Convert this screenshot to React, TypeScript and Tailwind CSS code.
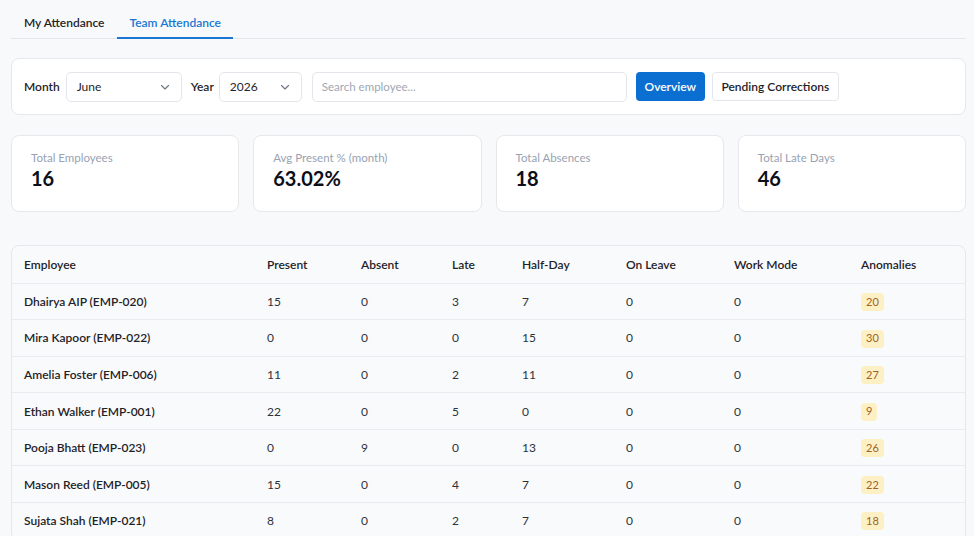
import React from "react";

const rows = [
  { name: "Dhairya AIP (EMP-020)", p: 15, a: 0, l: 3, h: 7, lv: 0, wm: 0, an: 20 },
  { name: "Mira Kapoor (EMP-022)", p: 0, a: 0, l: 0, h: 15, lv: 0, wm: 0, an: 30 },
  { name: "Amelia Foster (EMP-006)", p: 11, a: 0, l: 2, h: 11, lv: 0, wm: 0, an: 27 },
  { name: "Ethan Walker (EMP-001)", p: 22, a: 0, l: 5, h: 0, lv: 0, wm: 0, an: 9 },
  { name: "Pooja Bhatt (EMP-023)", p: 0, a: 9, l: 0, h: 13, lv: 0, wm: 0, an: 26 },
  { name: "Mason Reed (EMP-005)", p: 15, a: 0, l: 4, h: 7, lv: 0, wm: 0, an: 22 },
  { name: "Sujata Shah (EMP-021)", p: 8, a: 0, l: 2, h: 7, lv: 0, wm: 0, an: 18 },
];

const Chevron = () => (
  <svg width="12" height="12" viewBox="0 0 12 12" fill="none" stroke="#6b7280" strokeWidth="1.1" strokeLinecap="round" strokeLinejoin="round">
    <path d="M2.5 4.5 L6 8 L9.5 4.5" />
  </svg>
);

const stats = [
  { label: "Total Employees", value: "16" },
  { label: "Avg Present % (month)", value: "63.02%" },
  { label: "Total Absences", value: "18" },
  { label: "Total Late Days", value: "46" },
];

export default function App() {
  return (
    <div
      className="w-[974px] h-[536px] overflow-hidden bg-[#f8f9fb] pl-[11px] pr-[8px] text-[#111827]"
      style={{ fontFamily: 'Lato, "Noto Sans", sans-serif' }}
    >
      {/* Tabs */}
      <div className="flex h-[39px] border-b border-[#e3e6eb]">
        <div className="flex items-center h-[39px] px-[13px] pt-[8px] text-[12px] font-semibold text-[#1f2328] border-b-2 border-transparent">
          My Attendance
        </div>
        <div className="flex items-center h-[39px] px-[12px] pt-[8px] text-[12px] font-semibold text-[#1976d2] border-b-2 border-[#1976d2]">
          Team Attendance
        </div>
      </div>

      {/* Filters */}
      <div className="mt-[19px] h-[57px] bg-white border border-[#e6e8ec] rounded-[8px] flex items-center pl-[12px]">
        <span className="text-[12px] font-semibold text-[#1f2328]">Month</span>
        <div className="ml-[6px] w-[116px] h-[30px] border border-[#e3e6eb] rounded-[5px] flex items-center justify-between pl-[10px] pr-[10px] text-[12px] text-[#1f2328]">
          <span>June</span>
          <Chevron />
        </div>
        <span className="ml-[9px] text-[12px] font-semibold text-[#1f2328]">Year</span>
        <div className="ml-[5px] w-[83px] h-[30px] border border-[#e3e6eb] rounded-[5px] flex items-center justify-between pl-[10px] pr-[10px] text-[12px] text-[#1f2328]">
          <span>2026</span>
          <Chevron />
        </div>
        <div className="ml-[10px] w-[315px] h-[30px] border border-[#e3e6eb] rounded-[5px] flex items-center pl-[9px] text-[11.5px] text-[#a0a7b4]">
          Search employee...
        </div>
        <div className="ml-[9px] w-[69px] h-[29px] rounded-[4px] bg-[#0a6fd1] text-white text-[12px] font-semibold flex items-center justify-center">
          Overview
        </div>
        <div className="ml-[7px] w-[127px] h-[29px] rounded-[4px] border border-[#e3e6eb] bg-white text-[#1f2328] text-[12px] font-semibold flex items-center justify-center">
          Pending Corrections
        </div>
      </div>

      {/* Stats */}
      <div className="mt-[20px] grid grid-cols-4 gap-[14px]">
        {stats.map((s) => (
          <div key={s.label} className="h-[77px] bg-white border border-[#e6e8ec] rounded-[8px] pl-[19px] pt-[14px]">
            <div className="text-[11.5px] leading-[15px] text-[#98a2b3]">{s.label}</div>
            <div className="text-[20px] leading-[27px] font-bold text-[#0b0f19]">{s.value}</div>
          </div>
        ))}
      </div>

      {/* Table */}
      <div className="mt-[33px] border border-[#e6e8ec] rounded-[8px] bg-[#f9fafc] overflow-hidden">
        <table className="w-full table-fixed border-collapse text-[12px]">
          <colgroup>
            <col className="w-[243px]" />
            <col className="w-[94px]" />
            <col className="w-[91px]" />
            <col className="w-[70px]" />
            <col className="w-[104px]" />
            <col className="w-[108px]" />
            <col className="w-[127px]" />
            <col />
          </colgroup>
          <thead>
            <tr className="h-[37px] border-b border-[#e8ebef] text-left">
              {["Employee", "Present", "Absent", "Late", "Half-Day", "On Leave", "Work Mode", "Anomalies"].map((h) => (
                <th key={h} className="pl-[12px] pt-[1px] font-semibold text-[#1f2328]">{h}</th>
              ))}
            </tr>
          </thead>
          <tbody>
            {rows.map((r) => (
              <tr key={r.name} className="h-[36.6px] border-b border-[#e8ebef] text-[#2d333b]">
                <td className="pl-[12px] pt-[1px] font-semibold text-[#1f2328]">{r.name}</td>
                <td className="pl-[12px] pt-[1px]">{r.p}</td>
                <td className="pl-[12px] pt-[1px]">{r.a}</td>
                <td className="pl-[12px] pt-[1px]">{r.l}</td>
                <td className="pl-[12px] pt-[1px]">{r.h}</td>
                <td className="pl-[12px] pt-[1px]">{r.lv}</td>
                <td className="pl-[12px] pt-[1px]">{r.wm}</td>
                <td className="pl-[12px] pt-[1px]">
                  <span className="inline-flex items-center h-[18px] px-[5px] rounded-[4px] bg-[#fdf0c4] text-[#a0622a] text-[11px]">
                    {r.an}
                  </span>
                </td>
              </tr>
            ))}
          </tbody>
        </table>
      </div>
    </div>
  );
}
